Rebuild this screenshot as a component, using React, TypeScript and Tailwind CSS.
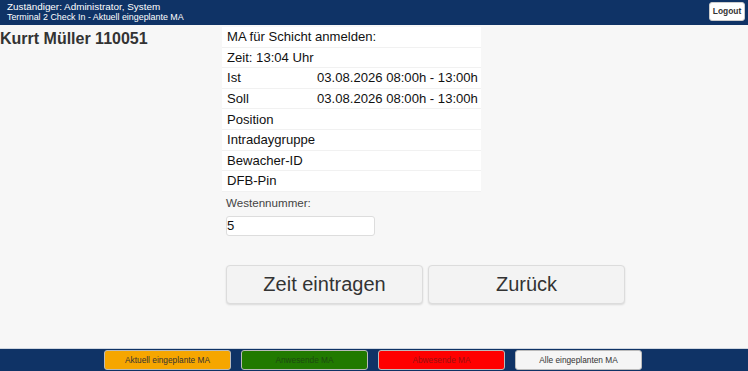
import React from "react";

const rows = [
  { label: "MA für Schicht anmelden:", value: "", full: true },
  { label: "Zeit: 13:04 Uhr", value: "", full: true },
  { label: "Ist", value: "03.08.2026 08:00h - 13:00h" },
  { label: "Soll", value: "03.08.2026 08:00h - 13:00h" },
  { label: "Position", value: "" },
  { label: "Intradaygruppe", value: "" },
  { label: "Bewacher-ID", value: "" },
  { label: "DFB-Pin", value: "" },
];

const footerButtons = [
  { label: "Aktuell eingeplante MA", className: "bg-[#f6a600] text-[#333]" },
  { label: "Anwesende MA", className: "bg-[#217a00] text-[#1d4a10]" },
  { label: "Abwesende MA", className: "bg-[#ff0000] text-[#9a1010]" },
  { label: "Alle eingeplanten MA", className: "bg-[#f5f5f5] text-[#333]" },
];

export default function App() {
  return (
    <div className="flex h-[371px] w-[748px] flex-col overflow-hidden bg-[#f7f7f7] font-['Liberation_Sans',Arial,sans-serif] text-[#222]">
      {/* Header */}
      <header className="flex h-[25px] shrink-0 items-start justify-between bg-[#0f3366] pl-[7px] pr-[3px] text-white">
        <div className="flex flex-col pt-[1px]">
          <span className="text-[9.9px] leading-[11px]">Zuständiger: Administrator, System</span>
          <span className="text-[8.9px] leading-[10px]">Terminal 2 Check In - Aktuell eingeplante MA</span>
        </div>
        <button className="mt-[2px] h-[19px] w-[36px] rounded-[3px] border border-[#ccc] bg-white text-[8.4px] font-bold text-[#333]">
          Logout
        </button>
      </header>

      {/* Main */}
      <main className="flex flex-1">
        <div className="w-[222px] shrink-0 pt-[4px]">
          <h1 className="text-[16px] font-bold leading-[20px] text-[#333]">Kurrt Müller 110051</h1>
        </div>

        <div className="flex flex-col pt-[2px]">
          <div className="w-[259px] bg-white">
            {rows.map((row) => (
              <div
                key={row.label}
                className="flex h-[20.6px] items-center whitespace-nowrap border-b border-[#f1f1f1] text-[13.1px] leading-none text-[#111]"
              >
                <span className={row.full ? "pl-[5px]" : "w-[95px] shrink-0 pl-[5px]"}>{row.label}</span>
                {row.value && <span>{row.value}</span>}
              </div>
            ))}
          </div>

          <label className="mt-[4px] pl-[4px] text-[11.6px] leading-[14px] text-[#444]">Westennummer:</label>
          <input
            className="ml-[4px] mt-[6px] h-[20px] w-[149px] rounded-[3px] border border-[#ddd] bg-white px-0 text-[13.1px] text-[#111] outline-none"
            defaultValue="5"
          />

          <div className="ml-[4px] mt-[29px] flex gap-[5px]">
            <button className="h-[39px] w-[197px] rounded-[4px] border border-[#dcdcdc] bg-[#f3f3f3] text-[20px] text-[#333] shadow-[0_1px_2px_rgba(0,0,0,0.12)]">
              Zeit eintragen
            </button>
            <button className="h-[39px] w-[197px] rounded-[4px] border border-[#dcdcdc] bg-[#f3f3f3] text-[20px] text-[#333] shadow-[0_1px_2px_rgba(0,0,0,0.12)]">
              Zurück
            </button>
          </div>
        </div>
      </main>

      {/* Footer */}
      <footer className="flex h-[23px] shrink-0 items-center gap-[10px] border-t border-[#cfd6e0] bg-[#0f3366] pl-[104px]">
        {footerButtons.map((b) => (
          <button
            key={b.label}
            className={`h-[20px] w-[127px] rounded-[3px] border border-[#bbb] text-[8.3px] leading-none ${b.className}`}
          >
            {b.label}
          </button>
        ))}
      </footer>
    </div>
  );
}
